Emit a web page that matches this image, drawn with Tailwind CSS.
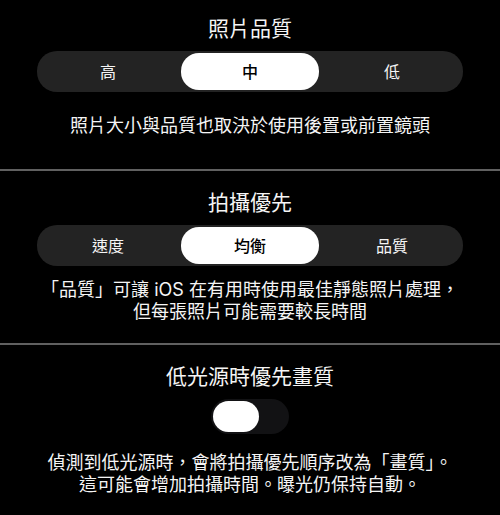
<!DOCTYPE html>
<html lang="zh-Hant">
<head>
<meta charset="utf-8">
<meta name="viewport" content="width=device-width, initial-scale=1">
<title>照片品質</title>
<script src="https://cdn.jsdelivr.net/npm/@tailwindcss/browser@4"></script>
</head>
<body class="min-h-screen bg-black text-center font-['Inter','Noto_Sans_CJK_TC',sans-serif] text-[#f5f5f5]">
<main class="flex flex-col divide-y-2 divide-[#606060]">
  <section class="px-9 pt-[17px] pb-8">
    <fieldset>
      <legend class="w-full text-[21px] leading-6">照片品質</legend>
      <div class="mx-px mt-[10px] grid h-[41px] grid-cols-3 rounded-[20px] bg-[#232323] py-0.5 text-base">
        <label class="mx-0.5 flex items-center justify-center rounded-[18px] has-checked:bg-white has-checked:font-medium has-checked:text-black"><input class="sr-only" type="radio" name="quality">高</label>
        <label class="mx-0.5 flex items-center justify-center rounded-[18px] has-checked:bg-white has-checked:font-medium has-checked:text-black"><input class="sr-only" type="radio" name="quality" checked>中</label>
        <label class="mx-0.5 flex items-center justify-center rounded-[18px] has-checked:bg-white has-checked:font-medium has-checked:text-black"><input class="sr-only" type="radio" name="quality">低</label>
      </div>
    </fieldset>
    <p class="mt-[23px] text-lg leading-[22px]">照片大小與品質也取決於使用後置或前置鏡頭</p>
  </section>
  <section class="px-9 pt-5 pb-5">
    <fieldset>
      <legend class="w-full text-[21px] leading-6">拍攝優先</legend>
      <div class="mx-px mt-[10px] grid h-[41px] grid-cols-3 rounded-[20px] bg-[#232323] py-0.5 text-base">
        <label class="mx-0.5 flex items-center justify-center rounded-[18px] has-checked:bg-white has-checked:font-medium has-checked:text-black"><input class="sr-only" type="radio" name="priority">速度</label>
        <label class="mx-0.5 flex items-center justify-center rounded-[18px] has-checked:bg-white has-checked:font-medium has-checked:text-black"><input class="sr-only" type="radio" name="priority" checked>均衡</label>
        <label class="mx-0.5 flex items-center justify-center rounded-[18px] has-checked:bg-white has-checked:font-medium has-checked:text-black"><input class="sr-only" type="radio" name="priority">品質</label>
      </div>
    </fieldset>
    <p class="mt-[13px] text-lg leading-[22px]">「品質」可讓 iOS 在有用時使用最佳靜態照片處理，<br>但每張照片可能需要較長時間</p>
  </section>
  <section class="px-9 pt-5 pb-4">
    <label for="lowlight" class="block text-[21px] leading-6">低光源時優先畫質</label>
    <input id="lowlight" type="checkbox" role="switch" class="mx-auto mt-[10px] block h-[35px] w-[78px] appearance-none rounded-full bg-[#121214] p-0.5 before:block before:h-[31px] before:w-[46px] before:rounded-full before:bg-white checked:before:ml-auto">
    <p class="mt-[18px] text-lg leading-[22px]">偵測到低光源時，會將拍攝優先順序改為「畫質」。<br>這可能會增加拍攝時間。曝光仍保持自動。</p>
  </section>
</main>
</body>
</html>
